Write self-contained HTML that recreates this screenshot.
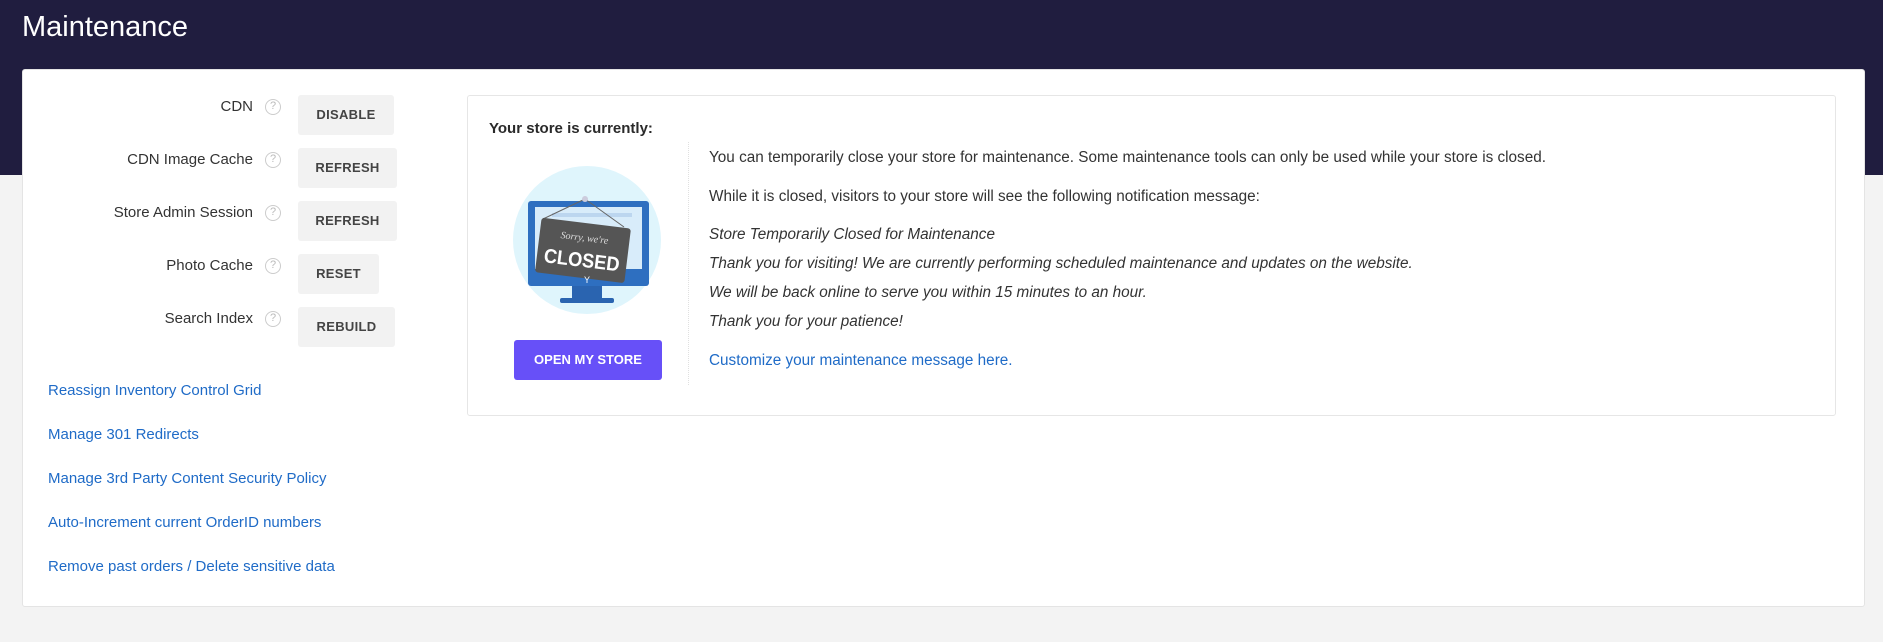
<!DOCTYPE html>
<html><head><style>
*{margin:0;padding:0;box-sizing:border-box}
body{width:1883px;height:642px;background:#f3f3f3;font-family:"Liberation Sans",sans-serif;color:#333;position:relative;overflow:hidden}
.hdr{position:absolute;left:0;top:0;width:1883px;height:175px;background:#201d3f}
.title{position:absolute;left:22px;top:11px;font-size:29px;color:#fff}
.card{position:absolute;left:22px;top:69px;width:1843px;height:538px;background:#fff;border-radius:3px;border:1px solid #e4e4e4}
.lbl{position:absolute;right:1630px;font-size:15px;color:#333;text-align:right;white-space:nowrap}
.q{position:absolute;left:265px;width:16px;height:16px;border:1.5px solid #ccc;border-radius:50%;color:#bbb;font-size:11px;text-align:center;line-height:13px}
.btn{position:absolute;left:298px;height:40px;background:#f2f2f2;border-radius:3px;font-size:13px;font-weight:bold;color:#444;text-align:center;line-height:40px;letter-spacing:.3px}
.lnk{position:absolute;left:48px;font-size:15px;color:#1f6bc7}
.box{position:absolute;left:467px;top:95px;width:1369px;height:321px;border:1px solid #e6e6e6;border-radius:3px}
.t{position:absolute;left:709px;font-size:15.3px;color:#333;white-space:nowrap}
.i{font-style:italic}
</style></head><body>
<div class="hdr"></div>
<div class="title">Maintenance</div>
<div class="card"></div>

<div class="lbl" style="top:98px">CDN</div><div class="q" style="top:99px">?</div><div class="btn" style="top:95px;width:96px">DISABLE</div>
<div class="lbl" style="top:151px">CDN Image Cache</div><div class="q" style="top:152px">?</div><div class="btn" style="top:148px;width:99px">REFRESH</div>
<div class="lbl" style="top:204px">Store Admin Session</div><div class="q" style="top:205px">?</div><div class="btn" style="top:201px;width:99px">REFRESH</div>
<div class="lbl" style="top:257px">Photo Cache</div><div class="q" style="top:258px">?</div><div class="btn" style="top:254px;width:81px">RESET</div>
<div class="lbl" style="top:310px">Search Index</div><div class="q" style="top:311px">?</div><div class="btn" style="top:307px;width:97px">REBUILD</div>

<div class="lnk" style="top:382px">Reassign Inventory Control Grid</div>
<div class="lnk" style="top:426px">Manage 301 Redirects</div>
<div class="lnk" style="top:470px">Manage 3rd Party Content Security Policy</div>
<div class="lnk" style="top:514px">Auto-Increment current OrderID numbers</div>
<div class="lnk" style="top:558px">Remove past orders / Delete sensitive data</div>

<div class="box"></div>
<div style="position:absolute;left:489px;top:120px;font-size:15px;font-weight:bold;color:#2a2a2a">Your store is currently:</div>
<div style="position:absolute;left:688px;top:142px;width:0;height:243px;border-left:1px dotted #e0e0e0"></div>
<svg style="position:absolute;left:512px;top:165px" width="150" height="150" viewBox="0 0 150 150">
<circle cx="75" cy="75" r="74" fill="#dff5fc"/>
<rect x="16" y="36" width="121" height="85" rx="3" fill="#2e6fc0"/>
<rect x="23" y="42" width="107" height="62" fill="#d8ecfa"/>
<rect x="40" y="48" width="80" height="4" fill="#bcd6ef"/>
<rect x="60" y="121" width="30" height="14" fill="#2a64b0"/>
<rect x="48" y="133" width="54" height="5" rx="2" fill="#2a64b0"/>
<path d="M73 34 L31 54 M73 34 L112 62" stroke="#666" stroke-width="1"/>
<circle cx="73" cy="34" r="3" fill="#ccd"/>
<g transform="rotate(7 72 85)"><rect x="26" y="58" width="90" height="55" rx="3" fill="#555"/>
<text x="71" y="76" font-size="10" font-style="italic" fill="#ddd" text-anchor="middle" font-family="Liberation Serif,serif">Sorry, we're</text>
<text x="71" y="102" font-size="20" font-weight="bold" fill="#fff" text-anchor="middle" textLength="76" lengthAdjust="spacingAndGlyphs" font-family="Liberation Sans Narrow,Liberation Sans,sans-serif">CLOSED</text></g>
<text x="75" y="118" font-size="9" fill="#fff" text-anchor="middle">Y</text>
</svg>
<div style="position:absolute;left:514px;top:340px;width:148px;height:40px;background:#6750f8;border-radius:3px;color:#fff;font-size:13px;font-weight:bold;text-align:center;line-height:40px">OPEN MY STORE</div>

<div class="t" style="top:149px">You can temporarily close your store for maintenance. Some maintenance tools can only be used while your store is closed.</div>
<div class="t" style="top:188px">While it is closed, visitors to your store will see the following notification message:</div>
<div class="t i" style="top:226px">Store Temporarily Closed for Maintenance</div>
<div class="t i" style="top:255px">Thank you for visiting! We are currently performing scheduled maintenance and updates on the website.</div>
<div class="t i" style="top:284px">We will be back online to serve you within 15 minutes to an hour.</div>
<div class="t i" style="top:313px">Thank you for your patience!</div>
<div class="t" style="top:352px;color:#1f6bc7">Customize your maintenance message here.</div>
</body></html>
